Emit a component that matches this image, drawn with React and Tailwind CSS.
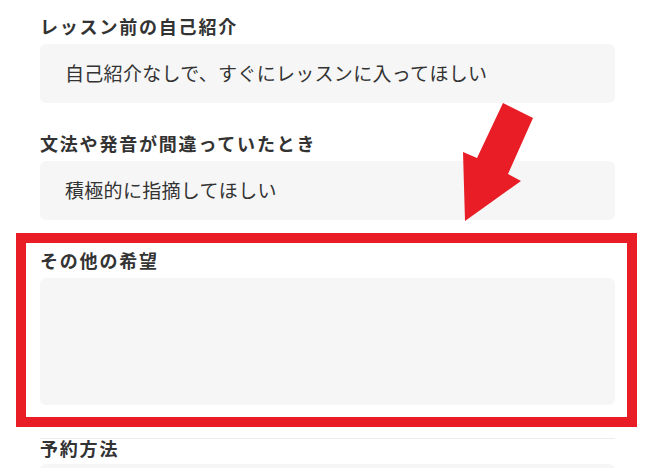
const SECTIONS = [
  { label: "レッスン前の自己紹介", value: "自己紹介なしで、すぐにレッスンに入ってほしい" },
  { label: "文法や発音が間違っていたとき", value: "積極的に指摘してほしい" },
];

function Label({ children }) {
  return (
    <div className="text-[18px] font-bold leading-[26px] tracking-[1.8px] text-[#333]">
      {children}
    </div>
  );
}

export default function App() {
  return (
    <div className="relative h-[468px] w-[661px] overflow-hidden bg-white font-['Noto_Sans_CJK_JP','Noto_Sans',sans-serif]">
      <div className="ml-[40px] flex w-[575px] flex-col pt-[13px]">
        {SECTIONS.map((s, i) => (
          <div key={s.label} className={i > 0 ? "mt-[27px]" : ""}>
            <Label>{s.label}</Label>
            <div className="mt-[5px] flex h-[59px] items-center rounded-md bg-[#f6f6f6] pl-[25px] text-[19px] tracking-[0.3px] text-[#333]">
              {s.value}
            </div>
          </div>
        ))}

        {/* free text field */}
        <div className="mt-[27px]">
          <Label>その他の希望</Label>
          <div className="mt-[5px] h-[127px] rounded-md bg-[#f6f6f6]" />
        </div>

        <div className="mt-[33px] border-t border-[#ececec]">
          <div className="text-[18px] font-bold leading-[18px] tracking-[1.8px] text-[#333]">
            予約方法
          </div>
          <div className="mt-[7px] h-[50px] rounded-md bg-[#f6f6f6]" />
        </div>
      </div>

      {/* annotation: red frame + arrow */}
      <div className="pointer-events-none absolute left-[16px] top-[233px] h-[194px] w-[621px] border-[10px] border-[#e81d26]" />
      <svg
        className="pointer-events-none absolute left-[455px] top-[95px]"
        width="90"
        height="135"
        viewBox="0 0 90 135"
      >
        <polygon
          points="48,8 78,23 53,79 66,86 10,126 8,57 22,63"
          fill="#e81d26"
        />
      </svg>
    </div>
  );
}
